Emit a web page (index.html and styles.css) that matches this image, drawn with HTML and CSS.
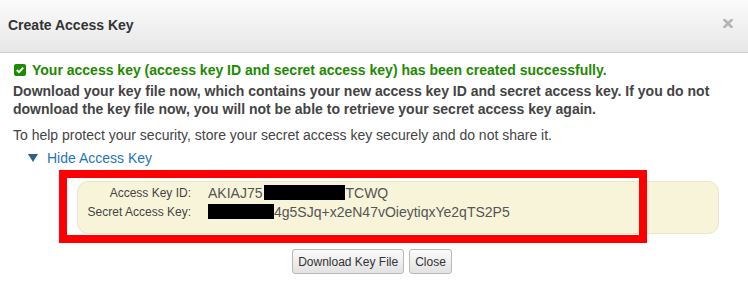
FILE: index.html
```html
<!DOCTYPE html>
<html>
<head>
<meta charset="utf-8">
<link rel="stylesheet" href="styles.css">
</head>
<body>
<div class="dialog">
  <div class="header">
    <span class="title">Create Access Key</span>
    <svg class="close" width="10" height="9" viewBox="0 0 10 9"><path d="M1.5 1 L8.5 8 M8.5 1 L1.5 8" stroke="#b4b4b4" stroke-width="2.6" stroke-linecap="square"/></svg>
  </div>
  <div class="content">
    <p class="success"><svg class="check" width="12" height="12" viewBox="0 0 12 12"><rect width="12" height="12" rx="2" fill="#1e8a00"/><path d="M2.8 6 L5 8.2 L9.2 3.6" stroke="#fff" stroke-width="1.9" fill="none"/></svg>Your access key (access key ID and secret access key) has been created successfully.</p>
    <p class="strong">Download your key file now, which contains your new access key ID and secret access key. If you do not download the key file now, you will not be able to retrieve your secret access key again.</p>
    <p class="info">To help protect your security, store your secret access key securely and do not share it.</p>
    <div class="toggle"><span class="tri"></span>Hide Access Key</div>
    <div class="keybox">
      <div class="row"><span class="label">Access Key ID:</span><span class="value">AKIAJ75<span class="redact r1"></span>TCWQ</span></div>
      <div class="row"><span class="label">Secret Access Key:</span><span class="value"><span class="redact r2"></span>4g5SJq+x2eN47vOieytiqxYe2qTS2P5</span></div>
    </div>
    <div class="buttons">
      <button class="btn">Download Key File</button>
      <button class="btn">Close</button>
    </div>
  </div>
  <div class="highlight"></div>
</div>
</body>
</html>
```
FILE: styles.css
```css
html, body {
  margin: 0;
  padding: 0;
  background: #fff;
}
body {
  font-family: "Liberation Sans", Arial, sans-serif;
  color: #444;
  width: 748px;
  height: 281px;
  overflow: hidden;
}
.dialog {
  position: relative;
}
.header {
  height: 52px;
  border-bottom: 1px solid #cfcfcf;
  background: linear-gradient(#fbfbfb, #e7e7e7);
  display: flex;
  align-items: center;
  justify-content: space-between;
  padding: 0 15px 0 8px;
}
.title {
  font-size: 14px;
  font-weight: bold;
  color: #333;
  margin-top: -3px;
}
.close {
  margin-top: -6px;
}
.content {
  padding: 0 13px;
}
p {
  margin: 0;
}
.success {
  margin-top: 8px;
  font-size: 14px;
  line-height: 18px;
  font-weight: bold;
  color: #1e8a00;
  display: flex;
  align-items: center;
}
.check {
  margin-right: 6px;
  margin-left: 1px;
}
.strong {
  font-size: 14px;
  line-height: 18px;
  font-weight: bold;
  color: #444;
  margin-top: 3px;
}
.info {
  font-size: 14px;
  line-height: 18px;
  margin-top: 8px;
  color: #444;
}
.toggle {
  margin-top: 5px;
  font-size: 14px;
  line-height: 18px;
  color: #1f75b9;
  display: flex;
  align-items: center;
  padding-left: 15px;
}
.tri {
  width: 0;
  height: 0;
  border-left: 5px solid transparent;
  border-right: 5px solid transparent;
  border-top: 8px solid #2b5f8e;
  margin-right: 9px;
}
.keybox {
  margin: 14px 16px 0 64px;
  height: 53px;
  box-sizing: border-box;
  background: #f8f4d9;
  border: 1px solid #ece6c4;
  border-radius: 11px;
  padding-top: 1px;
}
.row {
  display: flex;
  align-items: center;
  height: 19px;
}
.label {
  width: 113px;
  text-align: right;
  font-size: 12px;
  color: #444;
}
.value {
  margin-left: 17px;
  font-size: 14px;
  color: #555;
  display: flex;
  align-items: center;
}
.redact {
  display: inline-block;
  background: #000;
  height: 15px;
}
.r1 {
  width: 81px;
  margin-left: 2px;
}
.r2 {
  width: 66px;
}
.buttons {
  margin-top: 15px;
  display: flex;
  justify-content: center;
  gap: 5px;
  padding-right: 4px;
}
.btn {
  font-family: "Liberation Sans", Arial, sans-serif;
  font-size: 12px;
  color: #333;
  height: 25px;
  padding: 0 5px;
  background: linear-gradient(#fafafa, #e2e2e2);
  border: 1px solid #b9b9b9;
  border-radius: 3px;
}
.highlight {
  position: absolute;
  left: 59px;
  top: 170px;
  width: 588px;
  height: 73px;
  box-sizing: border-box;
  border: 8px solid #ff0000;
}
```
